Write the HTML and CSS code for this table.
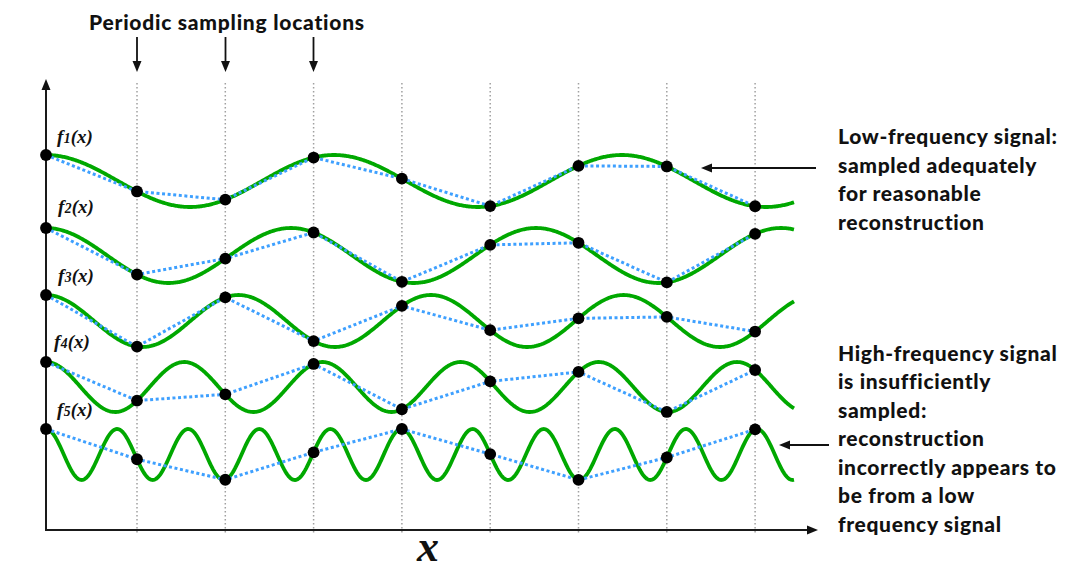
FILE: index.html
```html
<!DOCTYPE html>
<html>
<head>
<meta charset="utf-8">
<title>Periodic sampling</title>
<link rel="stylesheet" href="styles.css">
</head>
<body>
<div class="figure">
  <svg class="plot" id="plot" width="1081" height="585" viewBox="0 0 1081 585" xmlns="http://www.w3.org/2000/svg">
    <g id="grid" class="grid"></g>
    <g class="axes">
      <line x1="46" y1="531" x2="46" y2="88"></line>
      <line x1="45" y1="530" x2="808" y2="530"></line>
    </g>
    <g class="heads">
      <polygon points="46,79 41.5,90 50.5,90"></polygon>
      <polygon points="818,530 807,525.5 807,534.5"></polygon>
    </g>
    <g id="curves" class="curves"></g>
    <g id="recon" class="recon"></g>
    <g id="dots" class="dots"></g>
    <g class="pointers">
      <line x1="137" y1="37" x2="137" y2="63"></line>
      <line x1="225.5" y1="37" x2="225.5" y2="63"></line>
      <line x1="313.5" y1="37" x2="313.5" y2="63"></line>
      <line x1="816" y1="168" x2="710" y2="168"></line>
      <line x1="829" y1="445" x2="788" y2="445"></line>
    </g>
    <g class="heads">
      <polygon points="132.5,61 141.5,61 137,72"></polygon>
      <polygon points="221,61 230,61 225.5,72"></polygon>
      <polygon points="309,61 318,61 313.5,72"></polygon>
      <polygon points="701,168 712,163.5 712,172.5"></polygon>
      <polygon points="779,445 790,440.5 790,449.5"></polygon>
    </g>
  </svg>

  <div class="title">Periodic sampling locations</div>

  <div class="flabel f1"><i>f</i><span class="sub">1</span>(<i>x</i>)</div>
  <div class="flabel f2"><i>f</i><span class="sub">2</span>(<i>x</i>)</div>
  <div class="flabel f3"><i>f</i><span class="sub">3</span>(<i>x</i>)</div>
  <div class="flabel f4"><i>f</i><span class="sub">4</span>(<i>x</i>)</div>
  <div class="flabel f5"><i>f</i><span class="sub">5</span>(<i>x</i>)</div>

  <div class="axis-x"><i>x</i></div>

  <div class="note note-low">
    <div>Low-frequency signal:</div>
    <div>sampled adequately</div>
    <div>for reasonable</div>
    <div>reconstruction</div>
  </div>

  <div class="note note-high">
    <div>High-frequency signal</div>
    <div>is insufficiently</div>
    <div>sampled:</div>
    <div>reconstruction</div>
    <div>incorrectly appears to</div>
    <div>be from a low</div>
    <div>frequency signal</div>
  </div>
</div>
<script src="script.js"></script>
</body>
</html>
```

FILE: styles.css
```css
html, body {
  margin: 0;
  padding: 0;
  background: #ffffff;
}

.figure {
  position: relative;
  width: 1081px;
  height: 585px;
  overflow: hidden;
  font-family: Lato, "Noto Sans", sans-serif;
  color: #111;
}

.plot {
  position: absolute;
  left: 0;
  top: 0;
  display: block;
}

.grid line {
  stroke: #a0a0a0;
  stroke-width: 1.5;
  stroke-dasharray: 1.5 2.5;
}

.axes line {
  stroke: #1a1a1a;
  stroke-width: 2;
}

.pointers line {
  stroke: #111;
  stroke-width: 1.8;
}

.heads polygon {
  fill: #111;
}

.curves path {
  fill: none;
  stroke: #00a800;
  stroke-width: 3.8;
  stroke-linejoin: round;
}

.recon polyline {
  fill: none;
  stroke: #3ea0ff;
  stroke-width: 3;
  stroke-dasharray: 3 2.6;
}

.dots circle {
  fill: #000;
}

.title {
  position: absolute;
  left: 89px;
  top: 8px;
  font-size: 21px;
  font-weight: 900;
  letter-spacing: 0.75px;
  line-height: 28.5px;
  white-space: nowrap;
}

.note {
  position: absolute;
  left: 838px;
  font-size: 21px;
  font-weight: 900;
  letter-spacing: 0.65px;
  line-height: 28.5px;
  white-space: nowrap;
}

.note-low {
  top: 122px;
}

.note-high {
  top: 338.5px;
}

.flabel {
  position: absolute;
  font-family: "Liberation Serif", "Times New Roman", serif;
  font-weight: 700;
  font-style: italic;
  font-size: 19px;
  line-height: 19px;
  white-space: nowrap;
}

.flabel i {
  font-style: italic;
}

.flabel .sub {
  font-size: 0.72em;
  margin-left: 0.5px;
}

.f1 { left: 57px; top: 127px; }
.f2 { left: 58px; top: 197px; }
.f3 { left: 58px; top: 266px; }
.f4 { left: 54px; top: 332px; }
.f5 { left: 57px; top: 400px; }

.axis-x {
  position: absolute;
  left: 417px;
  top: 525px;
  font-family: "Liberation Serif", "Times New Roman", serif;
  font-weight: 700;
  font-size: 44px;
  line-height: 44px;
}

.axis-x i {
  font-style: italic;
}
```

FILE: script.js
```js
(function () {
  var NS = "http://www.w3.org/2000/svg";
  var xs = [46, 137, 225.3, 313.6, 401.9, 490.2, 578.5, 666.8, 755.1];
  var signals = [
    { mid: 181, amp: 26, period: 288 },
    { mid: 255.5, amp: 27.5, period: 245 },
    { mid: 321, amp: 26, period: 192.5 },
    { mid: 387, amp: 25, period: 138.2 },
    { mid: 454.5, amp: 25.5, period: 71.1 }
  ];
  function val(s, x) {
    return s.mid - s.amp * Math.cos(2 * Math.PI * (x - 46) / s.period);
  }
  var grid = document.getElementById("grid");
  var curves = document.getElementById("curves");
  var recon = document.getElementById("recon");
  var dots = document.getElementById("dots");

  for (var k = 1; k < xs.length; k++) {
    var ln = document.createElementNS(NS, "line");
    ln.setAttribute("x1", xs[k]);
    ln.setAttribute("x2", xs[k]);
    ln.setAttribute("y1", 83);
    ln.setAttribute("y2", 534);
    grid.appendChild(ln);
  }

  signals.forEach(function (s) {
    var d = "";
    for (var x = 46; x <= 794; x += 1) {
      d += (x === 46 ? "M" : "L") + x + " " + val(s, x).toFixed(2) + " ";
    }
    var p = document.createElementNS(NS, "path");
    p.setAttribute("d", d);
    curves.appendChild(p);

    var pts = xs.map(function (x) { return x + "," + val(s, x).toFixed(2); }).join(" ");
    var pl = document.createElementNS(NS, "polyline");
    pl.setAttribute("points", pts);
    recon.appendChild(pl);

    xs.forEach(function (x) {
      var c = document.createElementNS(NS, "circle");
      c.setAttribute("cx", x);
      c.setAttribute("cy", val(s, x).toFixed(2));
      c.setAttribute("r", 5.9);
      dots.appendChild(c);
    });
  });
})();
```
